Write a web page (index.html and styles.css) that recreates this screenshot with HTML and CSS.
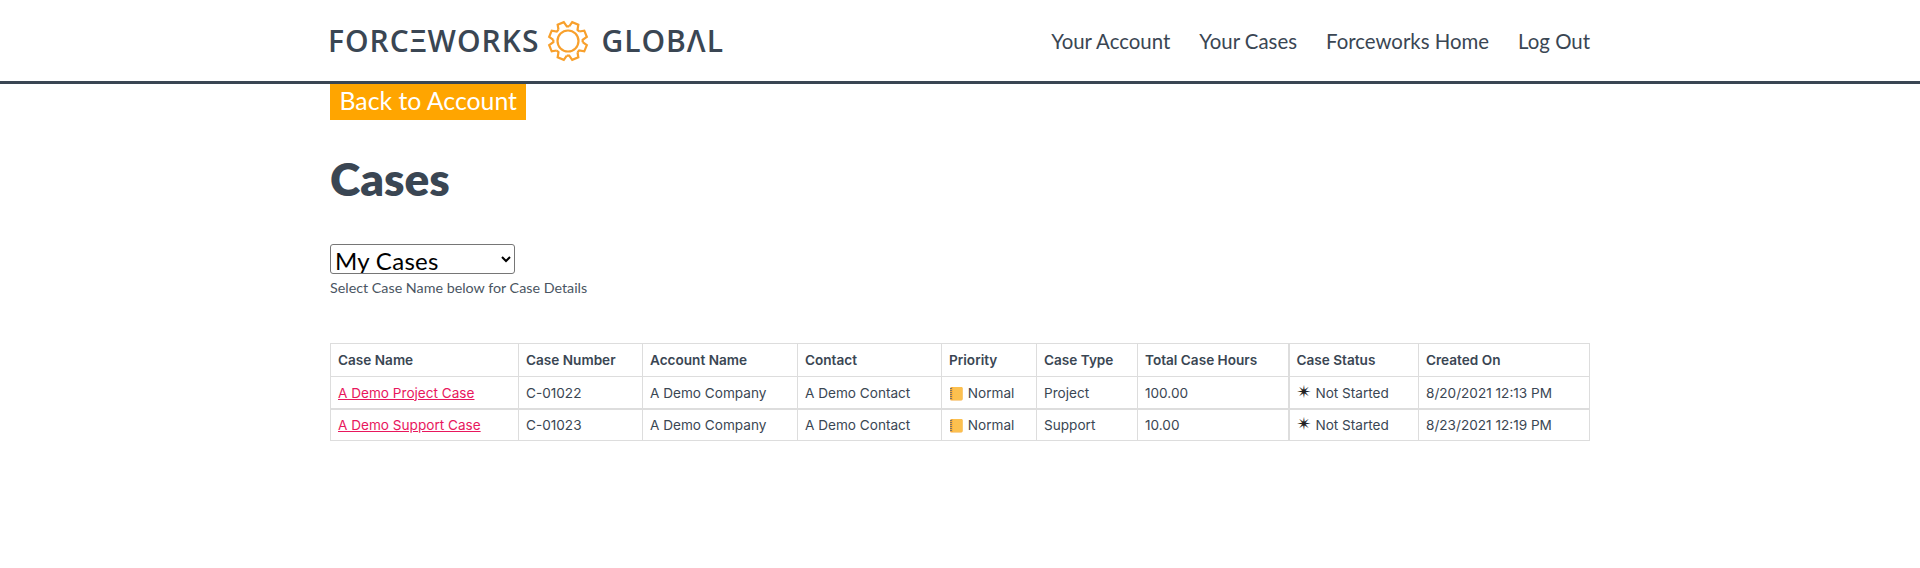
FILE: index.html
```html
<!DOCTYPE html>
<html lang="en">

<head>
    <meta charset="UTF-8">
    <meta name="viewport" content="width=device-width, initial-scale=1.0">
    <title>Cases - Forceworks Global</title>
    <link rel="stylesheet" href="styles.css">
</head>

<body>
    <header class="topbar">
        <div class="wrap topbar-inner">
            <a class="logo" href="#" aria-label="Forceworks Global">
                <span class="logo-word logo-first">FORCΞWORKS</span>
                <svg class="logo-gear" width="42" height="42" viewBox="-21 -21 42 42" aria-hidden="true">
                    <defs>
                        <path id="tooth" d="M-4.5 -14 L-3.3 -19 L3.3 -19 L4.5 -14 L6.72 -13.08" />
                    </defs>
                    <g transform="rotate(22.5)">
                        <use href="#tooth" />
                        <use href="#tooth" transform="rotate(45)" />
                        <use href="#tooth" transform="rotate(90)" />
                        <use href="#tooth" transform="rotate(135)" />
                        <use href="#tooth" transform="rotate(180)" />
                        <use href="#tooth" transform="rotate(225)" />
                        <use href="#tooth" transform="rotate(270)" />
                        <use href="#tooth" transform="rotate(315)" />
                    </g>
                    <circle r="10.5" />
                </svg>
                <span class="logo-word">GLOBΛL</span>
            </a>
            <nav class="nav">
                <a href="#">Your Account</a>
                <a href="#">Your Cases</a>
                <a href="#">Forceworks Home</a>
                <a href="#">Log Out</a>
            </nav>
        </div>
    </header>

    <main class="wrap">
        <a class="back-btn" href="#">Back to Account</a>
        <h1>Cases</h1>
        <select class="view-select">
            <option>My Cases</option>
        </select>
        <p class="hint">Select Case Name below for Case Details</p>

        <table class="cases">
            <colgroup>
                <col class="c1">
                <col class="c2">
                <col class="c3">
                <col class="c4">
                <col class="c5">
                <col class="c6">
                <col class="c7">
                <col class="c8">
                <col class="c9">
            </colgroup>
            <thead>
                <tr>
                    <th>Case Name</th>
                    <th>Case Number</th>
                    <th>Account Name</th>
                    <th>Contact</th>
                    <th>Priority</th>
                    <th>Case Type</th>
                    <th>Total Case Hours</th>
                    <th class="thick-left">Case Status</th>
                    <th>Created On</th>
                </tr>
            </thead>
            <tbody>
                <tr>
                    <td><a href="#">A Demo Project Case</a></td>
                    <td>C-01022</td>
                    <td>A Demo Company</td>
                    <td>A Demo Contact</td>
                    <td>
                        <svg class="ledger" width="14" height="15" viewBox="0 0 14 15" aria-hidden="true">
                            <rect x="1" y="1" width="12.5" height="13.5" rx="1.5" fill="#f4a93a" />
                            <rect x="3.5" y="1" width="10" height="13" rx="1" fill="#fcc04f" />
                            <path d="M1 2.5H3M1 4.5H3M1 6.5H3M1 8.5H3M1 10.5H3M1 12.5H3" stroke="#7c7468" stroke-width="1" />
                        </svg>
                        Normal
                    </td>
                    <td>Project</td>
                    <td>100.00</td>
                    <td class="thick-left"><span class="star">✴</span> Not Started</td>
                    <td>8/20/2021 12:13 PM</td>
                </tr>
                <tr class="thick-top">
                    <td><a href="#">A Demo Support Case</a></td>
                    <td>C-01023</td>
                    <td>A Demo Company</td>
                    <td>A Demo Contact</td>
                    <td>
                        <svg class="ledger" width="14" height="15" viewBox="0 0 14 15" aria-hidden="true">
                            <rect x="1" y="1" width="12.5" height="13.5" rx="1.5" fill="#f4a93a" />
                            <rect x="3.5" y="1" width="10" height="13" rx="1" fill="#fcc04f" />
                            <path d="M1 2.5H3M1 4.5H3M1 6.5H3M1 8.5H3M1 10.5H3M1 12.5H3" stroke="#7c7468" stroke-width="1" />
                        </svg>
                        Normal
                    </td>
                    <td>Support</td>
                    <td>10.00</td>
                    <td class="thick-left"><span class="star">✴</span> Not Started</td>
                    <td>8/23/2021 12:19 PM</td>
                </tr>
            </tbody>
        </table>
    </main>
</body>

</html>
```

FILE: styles.css
```css
body {
    margin: 0;
    background-color: #fff;
    color: #3a4653;
    font-family: Lato, "Open Sans", sans-serif;
}

.wrap {
    width: 1260px;
    margin: 0 auto;
}

/* header */
.topbar {
    height: 81px;
    border-bottom: 3px solid #3a4653;
}

.topbar-inner {
    display: flex;
    align-items: center;
    justify-content: space-between;
    height: 81px;
}

.logo {
    display: flex;
    align-items: center;
    margin-left: -2px;
    color: #3a4653;
    text-decoration: none;
}

.logo-word {
    font-family: "Open Sans", sans-serif;
    font-size: 30px;
    font-weight: 600;
    line-height: 1;
    letter-spacing: 1px;
}

.logo-gear {
    margin: 0 12px 0 8px;
    fill: none;
    stroke: #f8a02c;
    stroke-width: 2.2;
}

.nav {
    display: flex;
    gap: 29px;
}

.nav a {
    color: #3a4653;
    font-size: 20.4px;
    text-decoration: none;
}

/* page top */
.back-btn {
    display: inline-block;
    height: 36px;
    padding: 0 9.5px;
    background-color: #ffa500;
    color: #fff;
    font-size: 24.8px;
    line-height: 34px;
    text-decoration: none;
}

h1 {
    margin: 32px 0 38px;
    font-size: 46px;
    font-weight: 800;
    line-height: 54px;
}

.view-select {
    display: block;
    width: 185px;
    height: 30px;
    padding: 0;
    color: #000;
    background-color: #fff;
    border: 1px solid #767676;
    border-radius: 3px;
    font-family: Lato, "Open Sans", sans-serif;
    font-size: 24px;
    letter-spacing: 0.3px;
}

.hint {
    margin: 5px 0 46px;
    color: #4a5562;
    font-size: 14.3px;
    line-height: 18px;
}

/* table */
.cases {
    width: 1259px;
    table-layout: fixed;
    border-collapse: collapse;
    font-family: Inter, sans-serif;
    font-size: 13.6px;
}

.c1 { width: 188px; }
.c2 { width: 124px; }
.c3 { width: 155px; }
.c4 { width: 144px; }
.c5 { width: 95px; }
.c6 { width: 101px; }
.c7 { width: 151px; }
.c8 { width: 130px; }
.c9 { width: 171px; }

.cases th,
.cases td {
    height: 31px;
    padding: 0 7px;
    border: 1px solid #ddd;
    text-align: left;
    white-space: nowrap;
}

.cases th {
    height: 32px;
    font-weight: 600;
}

.cases a {
    color: #e8175d;
}

.cases .thick-left {
    border-left-width: 2px;
}

.cases .thick-top td {
    height: 30px;
    border-top-width: 2px;
}

.ledger {
    margin-right: 1px;
    vertical-align: -3px;
}

.star {
    color: #222;
    font-family: "DejaVu Sans", sans-serif;
    font-size: 18px;
    line-height: 0;
}
```
